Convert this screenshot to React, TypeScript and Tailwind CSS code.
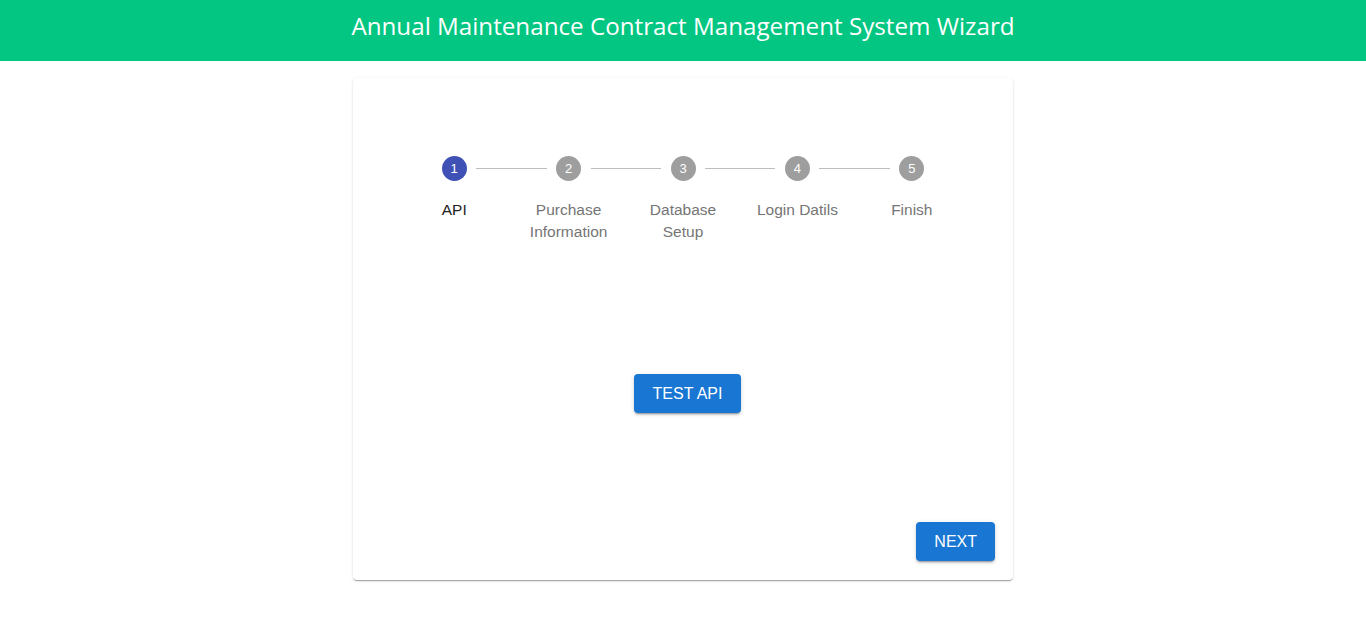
import React from "react";

const steps = [
  ["API"],
  ["Purchase", "Information"],
  ["Database", "Setup"],
  ["Login Datils"],
  ["Finish"],
];

export default function App() {
  return (
    <div className="min-h-[625px] bg-white" style={{ fontFamily: '"Liberation Sans", Arial, sans-serif' }}>
      <header className="h-[61px] bg-[#02c681] flex items-center justify-center">
        <h1
          className="text-white text-[24.2px] font-normal leading-none -mt-[8px]"
          style={{ fontFamily: '"Open Sans", sans-serif' }}
        >
          Annual Maintenance Contract Management System Wizard
        </h1>
      </header>
      <main className="flex justify-center pt-[17px]">
        <div className="w-[660px] h-[502px] bg-white rounded-[4px] shadow-[0px_2px_1px_-1px_rgba(0,0,0,0.2),0px_1px_1px_0px_rgba(0,0,0,0.14),0px_1px_3px_0px_rgba(0,0,0,0.12)] flex flex-col">
          <div className="flex px-[44px] pt-[78px]">
            {steps.map((lines, i) => (
              <div key={i} className="relative flex-1 flex flex-col items-center">
                {i > 0 && (
                  <div className="absolute top-[12px] left-[calc(-50%+22px)] right-[calc(50%+22px)] border-t border-[#bdbdbd]" />
                )}
                <div
                  className={`w-[25px] h-[25px] rounded-full flex items-center justify-center text-white text-[13px] ${
                    i === 0 ? "bg-[#3f51b5]" : "bg-[#9e9e9e]"
                  }`}
                >
                  {i + 1}
                </div>
                <div
                  className={`mt-[18px] text-[15.5px] leading-[22px] text-center ${
                    i === 0 ? "text-[#222]" : "text-[#757575]"
                  }`}
                >
                  {lines.map((l, j) => (
                    <div key={j}>{l}</div>
                  ))}
                </div>
              </div>
            ))}
          </div>
          <div className="flex-1 flex justify-center items-start pt-[131px] pl-[9px]">
            <button className="h-[39px] px-[18.5px] bg-[#1976d2] text-white text-[16px] rounded-[4px] shadow-[0px_3px_1px_-2px_rgba(0,0,0,0.2),0px_2px_2px_0px_rgba(0,0,0,0.14),0px_1px_5px_0px_rgba(0,0,0,0.12)] uppercase">
              Test API
            </button>
          </div>
          <div className="flex justify-end pr-[18px] pb-[19px]">
            <button className="h-[39px] px-[18px] bg-[#1976d2] text-white text-[16px] rounded-[4px] shadow-[0px_3px_1px_-2px_rgba(0,0,0,0.2),0px_2px_2px_0px_rgba(0,0,0,0.14),0px_1px_5px_0px_rgba(0,0,0,0.12)] uppercase">
              Next
            </button>
          </div>
        </div>
      </main>
    </div>
  );
}
